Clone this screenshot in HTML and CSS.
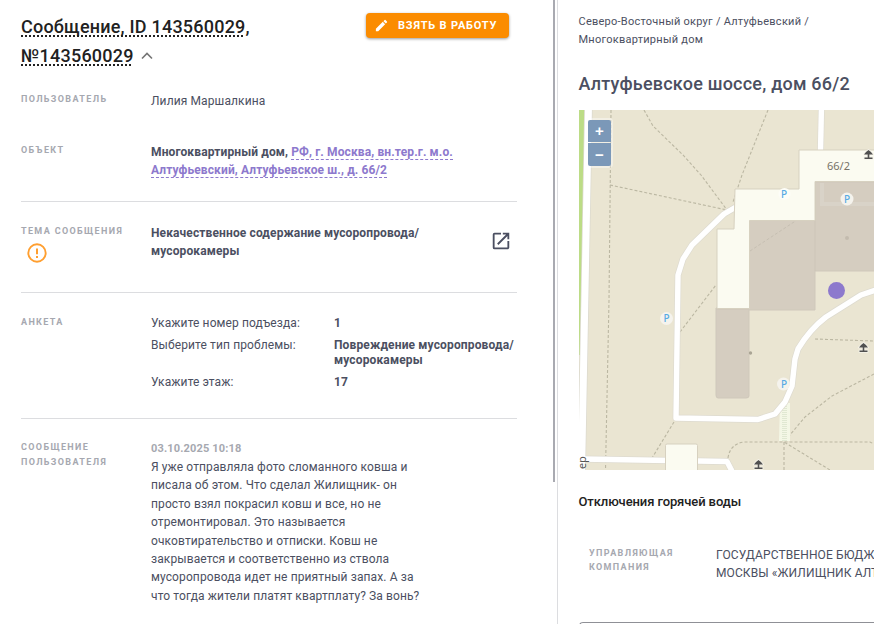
FILE: index.html
```html
<!DOCTYPE html>
<html lang="ru">
<head>
    <meta charset="UTF-8">
    <meta name="viewport" content="width=device-width, initial-scale=1.0">
    <title>Сообщение, ID 143560029</title>
    <link rel="stylesheet" href="styles.css">
</head>
<body>
    <div class="page">
        <main class="message-panel">
            <header class="message-header">
                <h1 class="message-title"><span class="dotted">Сообщение, ID 143560029</span>,<br><span class="dotted">№143560029</span><svg class="chevron" width="12" height="8" viewBox="0 0 12 8"><path d="M1 6.5L6 1.5L11 6.5" fill="none" stroke="#757575" stroke-width="1.6"/></svg></h1>
                <button class="take-btn" type="button">
                    <svg width="15" height="15" viewBox="0 0 24 24"><path fill="#fff" d="M3 17.25V21h3.75L17.81 9.94l-3.75-3.75L3 17.25zM20.71 7.04a1 1 0 0 0 0-1.41l-2.34-2.34a1 1 0 0 0-1.41 0l-1.83 1.83 3.75 3.75 1.83-1.83z"/></svg>
                    <span>Взять в работу</span>
                </button>
            </header>

            <section class="row row-user">
                <div class="label">Пользователь</div>
                <div class="value">Лилия Маршалкина</div>
            </section>
            <section class="row row-object">
                <div class="label">Объект</div>
                <div class="value bold">Многоквартирный дом, <a class="address">РФ, г. Москва, вн.тер.г. м.о.<br>Алтуфьевский, Алтуфьевское ш., д. 66/2</a></div>
            </section>
            <section class="row row-topic">
                <div class="label">Тема сообщения
                    <svg class="warn" width="20" height="20" viewBox="0 0 20 20"><circle cx="10" cy="10" r="8.7" fill="none" stroke="#ff9f30" stroke-width="1.9"/><path d="M10 5.4v5.8M10 12.9v2" stroke="#ff9f30" stroke-width="2"/></svg>
                </div>
                <div class="value bold">Некачественное содержание мусоропровода/<br>мусорокамеры</div>
                <svg class="open" width="22" height="22" viewBox="0 0 24 24"><path fill="#4b4f61" d="M19 19H5V5h7V3H5a2 2 0 0 0-2 2v14a2 2 0 0 0 2 2h14c1.1 0 2-.9 2-2v-7h-2v7zM14 3v2h3.59l-9.83 9.83 1.41 1.41L19 6.41V10h2V3h-7z"/></svg>
            </section>
            <section class="row row-form">
                <div class="label">Анкета</div>
                <dl class="answers">
                    <dt>Укажите номер подъезда:</dt>
                    <dd>1</dd>
                    <dt>Выберите тип проблемы:</dt>
                    <dd>Повреждение мусоропровода/<br>мусорокамеры</dd>
                    <dt>Укажите этаж:</dt>
                    <dd>17</dd>
                </dl>
            </section>
            <section class="row row-text">
                <div class="label">Сообщение<br>пользователя</div>
                <div class="value">
                    <div class="date">03.10.2025 10:18</div>
                    <p class="text">Я уже отправляла фото сломанного ковша и<br>писала об этом. Что сделал Жилищник- он<br>просто взял покрасил ковш и все, но не<br>отремонтировал. Это называется<br>очковтирательство и отписки. Ковш не<br>закрывается и соответственно из ствола<br>мусоропровода идет не приятный запах. А за<br>что тогда жители платят квартплату? За вонь?</p>
                </div>
            </section>
            <div class="scroll-thumb"></div>
        </main>

        <aside class="house-panel">
            <nav class="crumbs">Северо-Восточный округ / Алтуфьевский /<br>Многоквартирный дом</nav>
            <h2 class="house-title">Алтуфьевское шоссе, дом 66/2</h2>

            <div class="map">
                <svg class="map-canvas" width="295" height="360" viewBox="0 0 295 360">
                    <defs>
                        <g id="shelter">
                            <path d="M-4.500-.5Q-3-3 0-5Q3-3 4.500-.5ZM-.8-.5h1.600v2.900h3.200v1.500h-8v-1.500h3.200z" fill="#505050" stroke="#f5f3ea" stroke-width="1.600" paint-order="stroke"/>
                        </g>
                    </defs>
                    <rect width="295" height="360" fill="#eae5d2"/>
                    <path d="M0 0H6L1 245H0Z" fill="#bcdc86"/>
                    <!-- paths -->
                    <g fill="none" stroke="#bbb7a2" stroke-width="1.1" stroke-dasharray="3 2">
                        <path d="M32 0L30 190L26.500 360"/>
                        <path d="M65 0L74 16L104 45L122 65L148 100"/>
                        <path d="M189 0L163 65L154 92"/>
                        <path d="M31 75L148 100"/>
                        <path d="M101 222L137 175"/>
                        <path d="M95 312L73 348"/>
                        <path d="M236 229L295 231"/>
                        <path d="M295 264L253 286L226 307L205 332L251 360"/>
                        <path d="M205 332V360"/>
                        <path d="M149 348Q151 334 165 332H291L295 334"/>
                    </g>
                    <path d="M201 293H211V331H200Z" fill="#f4f7e6"/>
                    <path d="M205.500 294V331" stroke="#e0e8d2" stroke-width="5" stroke-dasharray="1 1"/>
                    <!-- roads -->
                    <g fill="none" stroke-linejoin="round">
                        <g stroke="#dedbd0" stroke-width="6.800">
                            <path d="M242.500-5L241.500 42"/>
                            <path d="M157 97L145 104L113 135L104 149L99 165L97 308L179 309.500L196 304L206 292L213 276L216 249L219 239Q231 219 247 207L282 185L300 179"/>
                            <path d="M3 349L148 351.500L154 363"/>
                        </g>
                        <path d="M9.500-5L5 235L2.500 365" stroke="#dcdacf" stroke-width="8.500"/>
                        <path d="M9.500-5L5 235L2.500 365" stroke="#fff" stroke-width="7"/>
                        <g stroke="#fff" stroke-width="5.4">
                            <path d="M242.500-5L241.500 42"/>
                            <path d="M157 97L145 104L113 135L104 149L99 165L97 308L179 309.500L196 304L206 292L213 276L216 249L219 239Q231 219 247 207L282 185L300 179"/>
                            <path d="M3 349L148 351.500L154 363"/>
                        </g>
                    </g>
                    <!-- buildings -->
                    <path d="M170 110H236V72H300V161H236V200H170V286Q170 288 167 288H139Q137 288 137 285V198H170Z" fill="#d5cdc0" stroke="#cfc8bb"/>
                    <path d="M243 73V94H295" fill="none" stroke="#d9d3c8" stroke-width="4"/>
                    <path d="M171 141L218 110" stroke="#c6bfb2" stroke-dasharray="3 2"/>
                    <path d="M236 72V161M170 199H137" stroke="#cac3b6" opacity=".6"/>
                    <path d="M156 79H220V40H300V71.500H236V110.500H170.500V198.500H138V119H155Z" fill="#fbfbf1" stroke="#d7d1c0" stroke-linejoin="round"/>
                    <rect x="86.500" y="334" width="32" height="30" rx="1.500" fill="#fbfbf1" stroke="#d7d1c0"/>
                    <circle cx="268" cy="128" r="2" fill="#c3bbae"/>
                    <circle cx="171.500" cy="243" r="1.700" fill="#aaa595"/>
                    <!-- parking -->
                    <g fill="#f5f3ed">
                        <circle cx="205.500" cy="84" r="6" fill="#fdfdf8"/>
                        <circle cx="268" cy="89" r="6.500"/>
                        <circle cx="87.500" cy="208.500" r="6.500"/>
                        <circle cx="204.500" cy="274" r="6.500"/>
                    </g>
                    <g class="parking">
                        <text x="205" y="88">P</text>
                        <text x="268" y="92.500">P</text>
                        <text x="87.500" y="212">P</text>
                        <text x="205" y="277.500">P</text>
                    </g>
                    <use href="#shelter" x="289.500" y="45"/>
                    <use href="#shelter" x="284.500" y="238"/>
                    <use href="#shelter" x="179.500" y="355"/>
                    <text class="house-no" x="248" y="59.500">66/2</text>
                    <text class="street" transform="translate(6.500 359) rotate(-90)">ер</text>
                    <circle cx="257.500" cy="180.500" r="8.500" fill="#8d79cd"/>
                </svg>
                <div class="map-zoom">
                    <button type="button">+</button>
                    <button type="button">−</button>
                </div>
            </div>

            <h3 class="water-title">Отключения горячей воды</h3>
            <div class="company">
                <div class="label">Управляющая<br>компания</div>
                <div class="company-name">ГОСУДАРСТВЕННОЕ БЮДЖЕТНОЕ<br>МОСКВЫ «ЖИЛИЩНИК АЛТУФЬЕВСКОГО</div>
            </div>
            <div class="house-card"></div>
        </aside>
    </div>
</body>
</html>
```
FILE: styles.css
```css
* {
    box-sizing: border-box;
}
body {
    margin: 0;
    font-family: Roboto, "Liberation Sans", sans-serif;
    font-size: 12px;
    line-height: 18px;
    letter-spacing: 0.11px;
    color: #4b4f61;
    background: #fff;
    overflow: hidden;
}
h1, h2, h3, p, dl, dd {
    margin: 0;
}
.page {
    display: flex;
    width: 874px;
    height: 624px;
    overflow: hidden;
}

/* сообщение */
.message-panel {
    position: relative;
    flex: 0 0 558px;
    padding: 12px 40px 0 21px;
    border-right: 1px solid #dcdde0;
}
.message-header {
    display: flex;
    justify-content: space-between;
    align-items: flex-start;
    height: 78px;
    padding-right: 8px;
}
.message-title {
    font-size: 18px;
    font-weight: 500;
    line-height: 29px;
    letter-spacing: 0.22px;
    color: #212121;
    white-space: nowrap;
}
.dotted {
    text-decoration: underline dotted 2px;
    text-underline-offset: 2px;
    text-decoration-skip-ink: none;
}
.chevron {
    margin-left: 7px;
    vertical-align: 2px;
}
.take-btn {
    display: flex;
    align-items: center;
    gap: 9px;
    width: 143px;
    height: 25px;
    margin-top: 1px;
    padding: 0 0 0 8px;
    border: none;
    border-radius: 4px;
    background: #fb8c00;
    box-shadow: 0 1px 3px rgba(0, 0, 0, 0.4);
    color: #fff;
    font: bold 11px Roboto, sans-serif;
    letter-spacing: 0.8px;
    text-transform: uppercase;
    white-space: nowrap;
}
.row {
    display: flex;
    width: 496px;
    border-bottom: 1px solid #dcdde0;
}
.label {
    flex: 0 0 130px;
    padding-top: 1px;
    font-size: 9px;
    font-weight: 700;
    line-height: 15px;
    letter-spacing: 1.36px;
    color: #a6a8b0;
    text-transform: uppercase;
    white-space: nowrap;
}
.value {
    flex: 1;
    padding-top: 2px;
    white-space: nowrap;
}
.bold {
    font-weight: 700;
    letter-spacing: 0.12px;
}
.row-user {
    height: 51px;
    padding-top: 1px;
    border-bottom: none;
}
.row-user .value {
    padding-top: 1px;
}
.row-object {
    height: 61px;
    padding-top: 1px;
}
.row-object .value {
    padding-top: 1px;
}
.address {
    color: #8d79cd;
    border-bottom: 1px dashed #8d79cd;
}
.row-topic {
    height: 91px;
    padding-top: 21px;
}
.row-topic .value {
    padding-top: 1px;
}
.warn {
    display: block;
    margin: 4px 0 0 6.4px;
}
.open {
    margin: 7px 5px 0 0;
}
.row-form {
    height: 126px;
    padding-top: 21px;
}
.answers {
    display: grid;
    grid-template-columns: 183px 183px;
    grid-template-rows: 22px 37px 22px;
    line-height: 15px;
    padding-top: 2px;
    white-space: nowrap;
}
.answers dd {
    font-weight: 700;
    letter-spacing: 0.14px;
}
.row-text {
    padding-top: 20px;
    border-bottom: none;
}
.date {
    font-size: 11px;
    font-weight: 700;
    line-height: 16px;
    color: #a6a8b0;
    letter-spacing: 0.15px;
}
.text {
    padding-top: 1px;
    line-height: 18.4px;
}
.scroll-thumb {
    position: absolute;
    top: 0;
    right: 2px;
    width: 2px;
    height: 482px;
    background: #a9aab1;
}

/* дом */
.house-panel {
    flex: 1;
    min-width: 0;
    padding: 13px 0 0 21px;
    overflow: hidden;
    white-space: nowrap;
}
.crumbs {
    margin-left: -0.5px;
    font-size: 11px;
    letter-spacing: 0.25px;
}
.house-title {
    margin: 22px 0 0 -0.5px;
    font-size: 18px;
    font-weight: 500;
    line-height: 26px;
    letter-spacing: 0.22px;
}
.map {
    position: relative;
    height: 360px;
    margin-top: 13px;
    overflow: hidden;
}
.map-canvas {
    display: block;
    letter-spacing: 0;
}
.parking {
    font: 500 10px "Noto Sans", sans-serif;
    fill: #56aae4;
    text-anchor: middle;
}
.house-no {
    font: 11px "Noto Sans", sans-serif;
    fill: #777268;
}
.street {
    font: 11px "Noto Sans", sans-serif;
    fill: #555;
}
.map-zoom {
    position: absolute;
    top: 8px;
    left: 7px;
    display: grid;
    gap: 1px;
    padding: 2px;
    border-radius: 4px;
    background: rgba(255, 255, 255, 0.4);
}
.map-zoom button {
    width: 23px;
    height: 22px;
    padding: 0;
    border: none;
    border-radius: 2px 2px 0 0;
    background: #7b98b8;
    color: #fff;
    font: bold 15px/22px "Liberation Sans", sans-serif;
}
.map-zoom button:last-child {
    height: 23px;
    border-radius: 0 0 2px 2px;
    line-height: 21px;
}
.water-title {
    margin: 22px 0 0 -0.5px;
    font-size: 13px;
    font-weight: 500;
    line-height: 20px;
    letter-spacing: -0.1px;
    color: #212121;
}
.company {
    display: flex;
    margin-top: 33px;
    padding-left: 10px;
}
.company .label {
    flex-basis: 127px;
    line-height: 14px;
}
.company-name {
    padding-top: 1px;
}
.house-card {
    height: 40px;
    margin-top: 40px;
    border: 1px solid #8f9096;
    border-right: none;
    border-radius: 4px 0 0 0;
}
```
